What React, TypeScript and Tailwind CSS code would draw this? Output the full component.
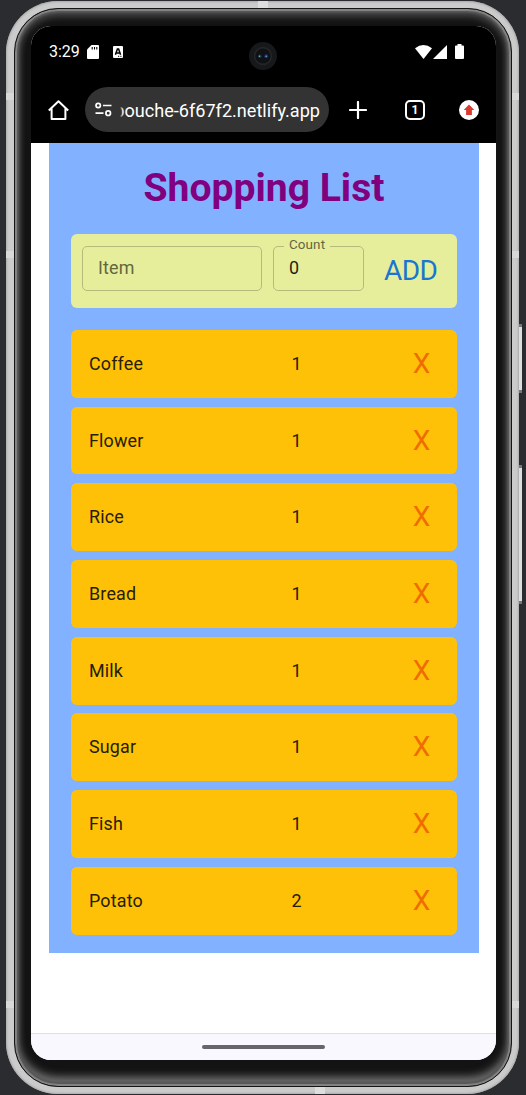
import React from "react";

const items = [
  { name: "Coffee", count: 1 },
  { name: "Flower", count: 1 },
  { name: "Rice", count: 1 },
  { name: "Bread", count: 1 },
  { name: "Milk", count: 1 },
  { name: "Sugar", count: 1 },
  { name: "Fish", count: 1 },
  { name: "Potato", count: 2 },
];

function StatusBar() {
  return (
    <div className="relative flex h-[51px] items-center pl-[18px] text-white">
      <span className="w-[31px] pt-px text-[16px] leading-5">3:29</span>
      <svg className="ml-[7px] h-[14px] w-[12px]" viewBox="0 0 12 14" fill="#fff">
        <path d="M4.5 0H11a1 1 0 0 1 1 1v12a1 1 0 0 1-1 1H1a1 1 0 0 1-1-1V4.5Z" />
        <path d="M5.2 2v2.6M7.5 2v2.6M9.8 2v2.6" stroke="#000" strokeWidth="1.1" />
      </svg>
      <svg className="ml-[14px] h-[12px] w-[10px]" viewBox="0 0 10 12">
        <rect width="10" height="12" rx="1" fill="#fff" />
        <path d="M2.4 8.8 4.4 3h1.2l2 5.8M3.2 7h3.6" fill="none" stroke="#000" strokeWidth="1.5" />
        <path d="M5 10.3h1.2M7.3 10.3h1.2" stroke="#000" strokeWidth="1" />
      </svg>
      <svg className="absolute top-[16px] left-[218px] h-[28px] w-[28px]" viewBox="0 0 28 28">
        <circle cx="14" cy="14" r="14" fill="#17181a" />
        <circle cx="14" cy="14" r="9.2" fill="#242528" />
        <circle cx="14" cy="14" r="7.6" fill="#101115" />
        <circle cx="10.8" cy="14.3" r="1.8" fill="#193e47" />
        <circle cx="17.2" cy="14.3" r="2" fill="#1c315e" />
        <circle cx="10.5" cy="14.2" r=".7" fill="#65bfc2" />
        <circle cx="17.2" cy="14.2" r=".8" fill="#729ee4" />
      </svg>
      <svg className="ml-auto h-[14px] w-[17px]" viewBox="0 0 17 14" fill="#fff">
        <path d="M8.5 14 0 3.2Q8.5-3.2 17 3.2Z" />
      </svg>
      <svg className="ml-[1px] h-[14px] w-[14px]" viewBox="0 0 14 14" fill="#fff">
        <path d="M14 0v14H0Z" />
      </svg>
      <svg className="mr-[32px] ml-[8px] h-[15px] w-[9px]" viewBox="0 0 9 15" fill="#fff">
        <path d="M2.5 0h4v1.5H8a1 1 0 0 1 1 1V14a1 1 0 0 1-1 1H1a1 1 0 0 1-1-1V2.5a1 1 0 0 1 1-1h1.5Z" />
      </svg>
    </div>
  );
}

function BrowserBar() {
  return (
    <div className="flex h-[66px] items-center pl-[17px] text-white">
      <svg className="h-[20px] w-[21px]" viewBox="0 0 21 20" fill="none" stroke="#fff" strokeWidth="2">
        <path d="M.8 10.4 10.5 1.2l9.7 9.2M3.6 8.5V19h13.8V8.5" strokeLinejoin="round" />
      </svg>
      <div className="mb-px ml-[16px] flex h-[45px] w-[244px] items-center rounded-full bg-[#333] pl-[10px]">
        <svg className="h-[15px] w-[17px] shrink-0" viewBox="0 0 17 15" fill="none" stroke="#fff" strokeWidth="1.7">
          <circle cx="3.2" cy="3.5" r="2.2" />
          <path d="M8 3.5h8.5M.5 11.2h8" />
          <circle cx="13.2" cy="11.2" r="2.3" />
        </svg>
        <div className="relative ml-[8px] flex w-[200px] justify-end overflow-hidden pt-[2px] text-[18.1px] leading-7 whitespace-nowrap">
          <span>bouche-6f67f2.netlify.app</span>
          <span className="absolute inset-y-0 left-0 w-[3px] bg-gradient-to-r from-[#333] to-transparent" />
        </div>
      </div>
      <svg className="ml-[20px] h-[18px] w-[18px]" viewBox="0 0 18 18" stroke="#fff" strokeWidth="2.2" strokeLinecap="round">
        <path d="M9 1v16M1 9h16" />
      </svg>
      <div className="ml-[38px] flex h-[20px] w-[20px] items-center justify-center rounded-[5px] border-2 border-white text-[12px] leading-none font-bold">
        1
      </div>
      <svg className="ml-[34px] h-[20px] w-[20px]" viewBox="0 0 20 20">
        <circle cx="10" cy="10" r="10" fill="#fff" />
        <path d="m10 4.5 5.3 5.6h-2.4V15H7.1v-4.9H4.7Z" fill="#d93b2f" />
      </svg>
    </div>
  );
}

function AddForm() {
  return (
    <div className="mt-[22px] flex h-[74px] rounded-[6px] bg-[#e6ee9c] pt-[12px] pl-[11px]">
      <div className="flex h-[45px] w-[180px] items-center rounded-[5px] border border-[#b5bb7b] pl-[15px] text-[17.9px] tracking-[0.17px] text-[#63673f]">
        Item
      </div>
      <div className="relative ml-[11px] flex h-[45px] w-[91px] items-center rounded-[5px] border border-[#b5bb7b] pl-[15px] text-[17.9px] text-[#1e1f14]">
        <span className="absolute -top-[10px] left-[10px] bg-[#e6ee9c] px-[5px] text-[13.4px] leading-4 tracking-[0.13px] text-[#63673f]">
          Count
        </span>
        0
      </div>
      <button className="ml-[20px] h-[50px] text-[28px] leading-[50px] tracking-[-0.6px] text-[#1976d2]">ADD</button>
    </div>
  );
}

export default function App() {
  return (
    <main className="relative flex h-[1095px] w-[526px] overflow-hidden bg-[#2b2c30] font-[Roboto,sans-serif]">
      <div className="absolute top-[324px] left-[518px] h-[69px] w-[4px] border-y-[3px] border-[#777] bg-[#ddd]" />
      <div className="absolute top-[465px] left-[518px] h-[139px] w-[4px] border-y-[3px] border-[#777] bg-[#ddd]" />
      <div className="relative mt-[1px] ml-[6px] h-[1093px] w-[513px] shrink-0 rounded-[52px] bg-[#cbcbcb] pt-[7px] pr-[7px] pb-[7px] pl-[8px] shadow-[inset_0_0_2px_1px_#aaa]">
        <div className="absolute top-[92px] left-0 h-[7px] w-[8px] bg-[#d8d8d8]" />
        <div className="absolute top-[92px] right-0 h-[7px] w-[7px] bg-[#d8d8d8]" />
        <div className="absolute top-[250px] left-0 h-[7px] w-[8px] bg-[#d8d8d8]" />
        <div className="absolute top-[250px] right-0 h-[7px] w-[7px] bg-[#d8d8d8]" />
        <div className="absolute top-[1000px] left-0 h-[7px] w-[8px] bg-[#d8d8d8]" />
        <div className="absolute top-[1000px] right-0 h-[7px] w-[7px] bg-[#d8d8d8]" />
        <div className="absolute top-0 left-[252px] h-[7px] w-[10px] bg-[#dedede]" />
        <div className="absolute bottom-0 left-[309px] h-[7px] w-[10px] bg-[#dedede]" />
        <div className="h-[1079px] w-[498px] rounded-[44px] border border-[#141414] bg-[#131313] pt-[17px] pr-[15px] pb-[26px] pl-[16px] shadow-[inset_0_0_1px_2px_#858585,inset_0_0_2px_4px_#555,inset_0_4px_6px_4px_#444,inset_0_-7px_8px_2px_#777]">
          <div className="flex h-[1034px] w-[465px] flex-col overflow-hidden rounded-[20px] bg-white">
            <header className="h-[117px] shrink-0 bg-black">
              <StatusBar />
              <BrowserBar />
            </header>
            <section className="ml-[18px] h-[810px] w-[430px] shrink-0 bg-[#82b1ff] px-[22px] pt-[20px]">
              <h1 className="h-[49px] pt-px text-center text-[39.1px] leading-[49px] font-bold text-[#800080]">Shopping List</h1>
              <AddForm />
              <ul className="mt-[22px] flex flex-col gap-[8.9px]">
                {items.map((item) => (
                  <li
                    key={item.name}
                    className="flex h-[67.8px] items-center rounded-[6px] bg-[#ffc107] pl-[18px] text-[17.9px] tracking-[0.17px] text-[#261d01]"
                  >
                    <span className="w-[202.4px] pt-px">{item.name}</span>
                    <span className="pt-px">{item.count}</span>
                    <button className="mr-[26.5px] ml-auto text-[28px] text-[#ef6c00]">X</button>
                  </li>
                ))}
              </ul>
            </section>
            <footer className="mt-auto flex h-[27px] shrink-0 justify-center border-t border-[#dedde8] bg-[#f9f8ff] pt-[11px]">
              <div className="h-[4px] w-[123px] rounded-full bg-[#67666a]" />
            </footer>
          </div>
        </div>
      </div>
    </main>
  );
}
